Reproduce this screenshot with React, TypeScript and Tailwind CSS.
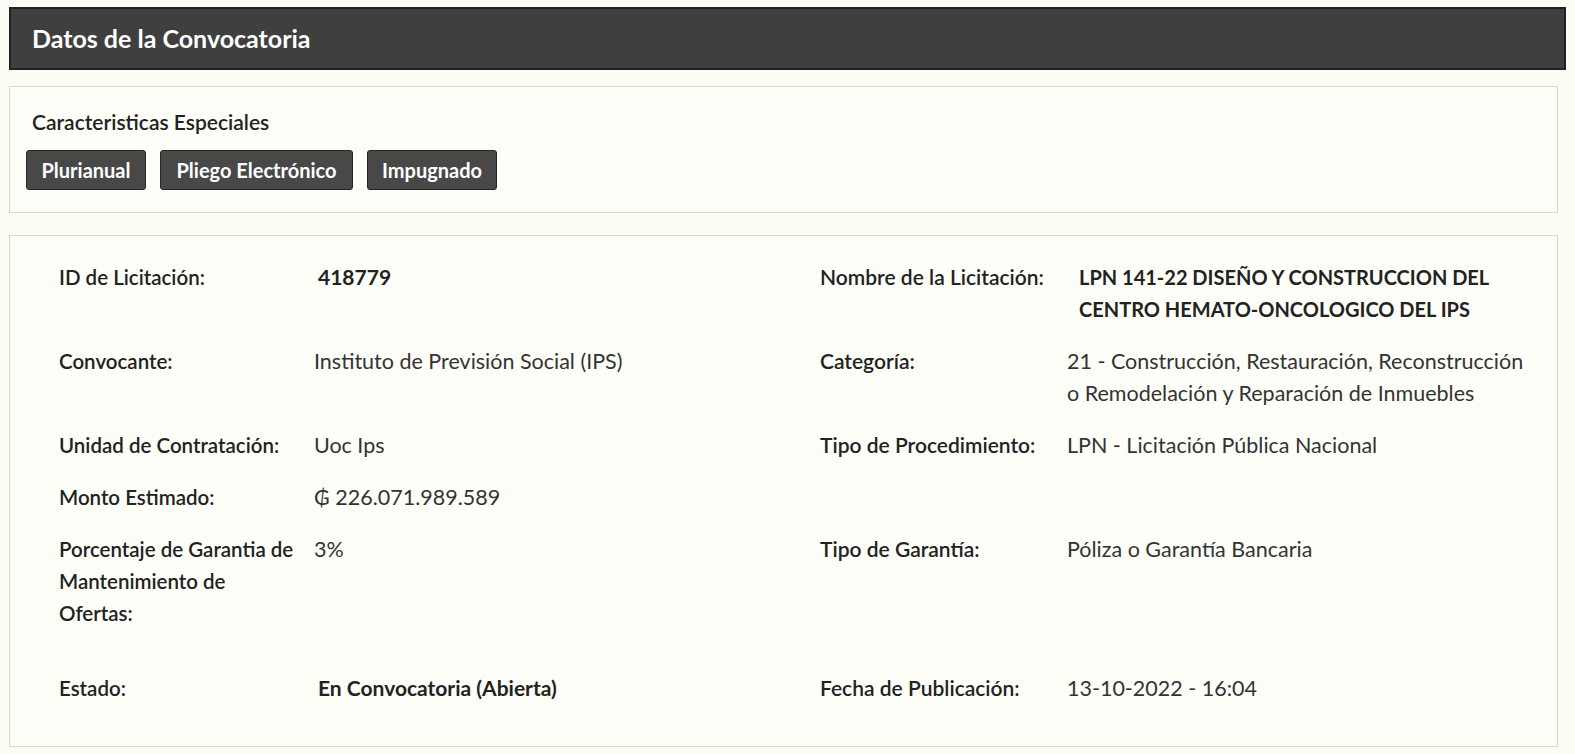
import React from 'react';

type Row = {
  label: string;
  value?: React.ReactNode;
  bold?: boolean;
  label2?: string;
  value2?: React.ReactNode;
  bold2?: boolean;
  extra?: string;
};

const rows: Row[] = [
  {
    label: 'ID de Licitación:',
    value: '418779',
    bold: true,
    label2: 'Nombre de la Licitación:',
    value2: 'LPN 141-22 DISEÑO Y CONSTRUCCION DEL CENTRO HEMATO-ONCOLOGICO DEL IPS',
    bold2: true,
  },
  {
    label: 'Convocante:',
    value: 'Instituto de Previsión Social (IPS)',
    label2: 'Categoría:',
    value2: '21 - Construcción, Restauración, Reconstrucción o Remodelación y Reparación de Inmuebles',
  },
  {
    label: 'Unidad de Contratación:',
    value: 'Uoc Ips',
    label2: 'Tipo de Procedimiento:',
    value2: 'LPN - Licitación Pública Nacional',
  },
  {
    label: 'Monto Estimado:',
    value: '₲ 226.071.989.589',
  },
  {
    label: 'Porcentaje de Garantia de Mantenimiento de Ofertas:',
    value: '3%',
    label2: 'Tipo de Garantía:',
    value2: 'Póliza o Garantía Bancaria',
  },
  {
    label: 'Estado:',
    value: 'En Convocatoria (Abierta)',
    bold: true,
    label2: 'Fecha de Publicación:',
    value2: '13-10-2022 - 16:04',
    extra: 'mt-[23px]',
  },
];

const badges = [
  { text: 'Plurianual', w: 'w-[120px]' },
  { text: 'Pliego Electrónico', w: 'w-[193px]' },
  { text: 'Impugnado', w: 'w-[130px]' },
];

export default function App() {
  return (
    <div
      className="min-h-[754px] bg-[#fdfdf6] pt-[7px] pl-[9px] text-[#2b2b2b]"
      style={{ fontFamily: 'Lato, "Open Sans", sans-serif' }}
    >
      <div className="w-[1557px] h-[63px] bg-[#3f3f3f] border-2 border-[#222] flex items-center pl-[21px]">
        <h1 className="text-[25px] font-bold text-white">Datos de la Convocatoria</h1>
      </div>

      <div className="mt-[16px] w-[1549px] h-[127px] border border-[#d9d9d1] bg-[#fefef8] pt-[23px] pl-[16px]">
        <h2 className="ml-[6px] text-[21px] leading-[24px] font-semibold text-[#222]">Caracteristicas Especiales</h2>
        <div className="mt-[16px] flex gap-[14px]">
          {badges.map((b) => (
            <span
              key={b.text}
              className={`${b.w} h-[40px] flex items-center justify-center rounded-[3px] bg-[#484848] border border-[#262626] text-white text-[20px] font-bold`}
            >
              {b.text}
            </span>
          ))}
        </div>
      </div>

      <div className="mt-[22px] w-[1549px] h-[512px] border border-[#d9d9d1] bg-[#fefef8] pt-[25px] pl-[49px]">
        <div className="flex flex-col gap-[20px] leading-[32px]">
          {rows.map((r, i) => (
            <div key={i} className={`flex ${r.extra ?? ''}`}>
              <div className="w-[255px] pr-[14px] text-[20.5px] font-semibold text-[#222]">{r.label}</div>
              <div
                className={`w-[506px] ${r.bold ? 'text-[21px] font-bold pl-[4px] text-[#222]' : 'text-[21.5px] text-[#333]'}`}
              >
                {r.value}
              </div>
              <div className="w-[247px] text-[21px] font-semibold text-[#222]">{r.label2}</div>
              <div
                className={`w-[462px] ${r.bold2 ? 'text-[20px] font-bold pl-[12px] text-[#222]' : 'text-[21.5px] text-[#333]'}`}
              >
                {r.value2}
              </div>
            </div>
          ))}
        </div>
      </div>
    </div>
  );
}
